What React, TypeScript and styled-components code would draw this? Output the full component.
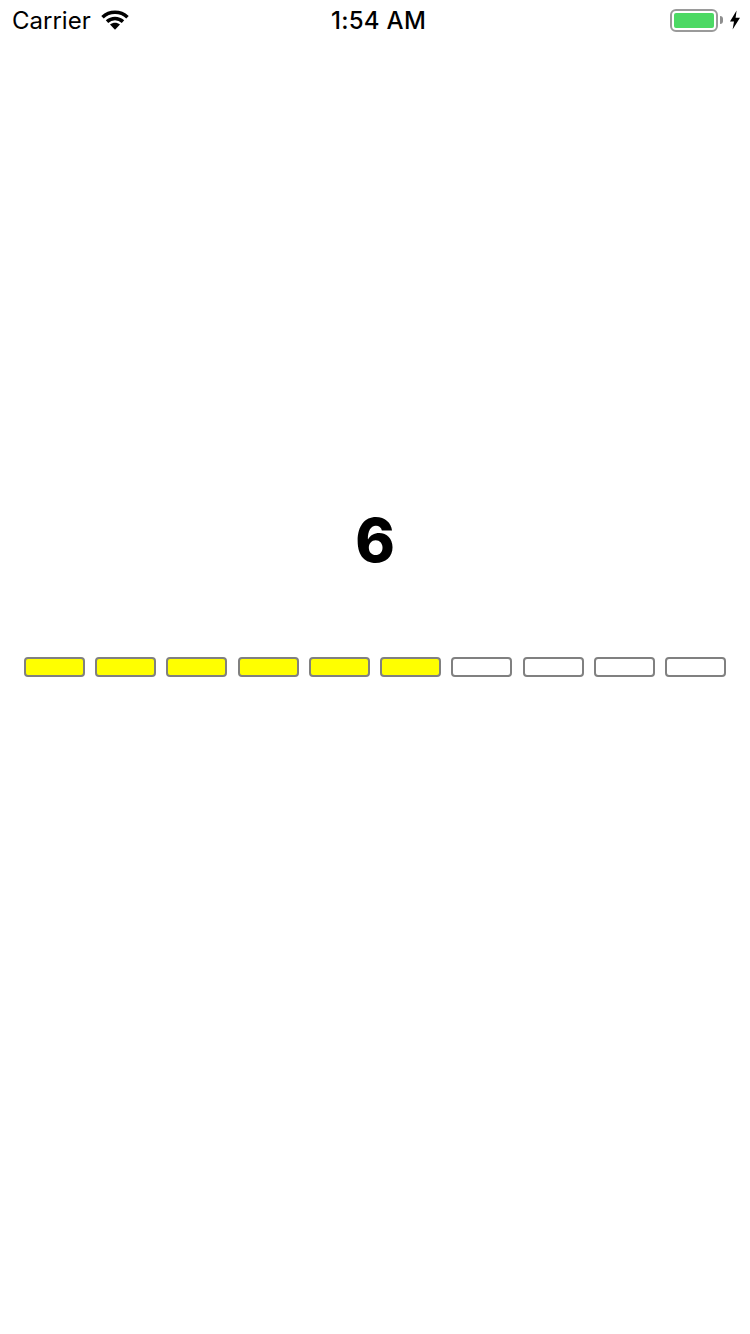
import { createGlobalStyle } from 'styled-components';
import styled from 'styled-components';

const TOTAL = 10;
const VALUE = 6;

const App = () => {
  const segments = Array.from({ length: TOTAL }, (_, i) => i < VALUE);

  return (
    <Screen>
      <GlobalStyle />
      <StatusBar>
        <StatusLeft>
          <Carrier>Carrier</Carrier>
          <svg width="30" height="22" viewBox="0 0 30 22">
            <path
              d="M2.5 8.2C9.6 1.6 20.4 1.6 27.5 8.2M7 12.6C11.6 8.4 18.4 8.4 23 12.6"
              fill="none"
              stroke="#000"
              strokeWidth="3.6"
            />
            <path d="M10 15.6C13 13 17 13 20 15.6L15 20.8Z" fill="#000" />
          </svg>
        </StatusLeft>
        <Clock>1:54 AM</Clock>
        <StatusRight>
          <BatteryShell>
            <BatteryFill />
          </BatteryShell>
          <BatteryCap />
          <svg width="12" height="20" viewBox="0 0 12 20">
            <path d="M7.6 0.5L1 11.4H5L3.6 19.5L11 7.8H6.6Z" fill="#000" />
          </svg>
        </StatusRight>
      </StatusBar>
      <Main>
        <Count>{VALUE}</Count>
        <SegmentRow>
          {segments.map((filled, i) => (
            <Segment key={i} $filled={filled} />
          ))}
        </SegmentRow>
      </Main>
    </Screen>
  );
};

export default App;

const GlobalStyle = createGlobalStyle`
  html, body {
    margin: 0;
    padding: 0;
    background: #fff;
    font-family: Inter, "Liberation Sans", sans-serif;
  }
`;

const Screen = styled.div`
  width: 750px;
  height: 1334px;
  display: flex;
  flex-direction: column;
  background: #fff;
  overflow: hidden;
`;

const StatusBar = styled.div`
  height: 40px;
  flex-shrink: 0;
  display: grid;
  grid-template-columns: 1fr auto 1fr;
  align-items: center;
  padding: 0 9px 0 12px;
  color: #000;
`;

const StatusLeft = styled.div`
  display: flex;
  align-items: center;
  gap: 9px;
`;

const Carrier = styled.span`
  font-size: 24px;
  font-weight: 400;
`;

const Clock = styled.span`
  margin-left: 4px;
  font-size: 24px;
  font-weight: 500;
  letter-spacing: 0.3px;
`;

const StatusRight = styled.div`
  display: flex;
  align-items: center;
  justify-content: flex-end;
  svg {
    margin-left: 6px;
  }
`;

const BatteryShell = styled.div`
  width: 48px;
  height: 23px;
  box-sizing: border-box;
  border: 2px solid #9a9a9a;
  border-radius: 6px;
  padding: 2px;
`;

const BatteryFill = styled.div`
  width: 100%;
  height: 100%;
  background: #4cd964;
  border-radius: 2px;
`;

const BatteryCap = styled.div`
  width: 3px;
  height: 8px;
  margin-left: 2px;
  background: #8e8e8e;
  border-radius: 0 3px 3px 0;
`;

const Main = styled.div`
  flex: 1;
  display: flex;
  flex-direction: column;
  align-items: stretch;
  padding-top: 458px;
`;

const Count = styled.div`
  height: 84px;
  line-height: 84px;
  text-align: center;
  font-size: 60px;
  font-weight: 800;
  color: #000;
  margin-bottom: 75px;
`;

const SegmentRow = styled.div`
  display: flex;
  justify-content: space-between;
  padding: 0 24px;
`;

const Segment = styled.div<{ $filled: boolean }>`
  width: 61px;
  height: 20px;
  box-sizing: border-box;
  border: 2px solid #808080;
  border-radius: 4px;
  background: ${(p) => (p.$filled ? '#ffff00' : '#fff')};
`;
